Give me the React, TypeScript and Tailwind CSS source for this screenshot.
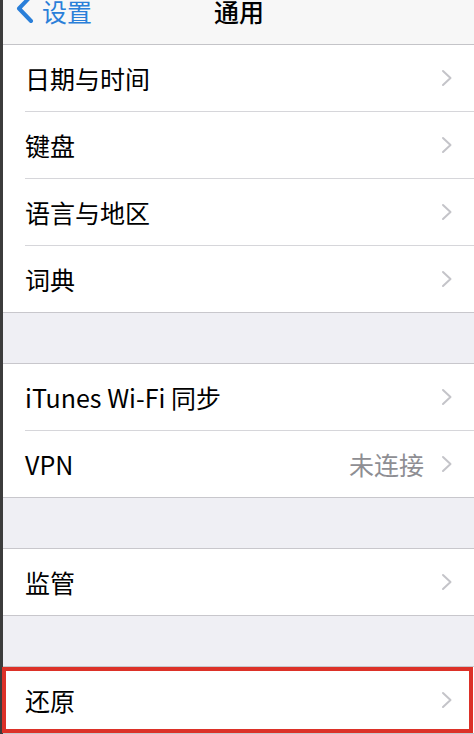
import React from "react";

const font = { fontFamily: '"Noto Sans CJK SC", "Noto Sans", sans-serif' };

function Chevron() {
  return (
    <svg width="12" height="18" viewBox="0 0 12 18" className="shrink-0">
      <path d="M2 2 L9.5 9 L2 16" fill="none" stroke="#c4c4c9" strokeWidth="2" strokeLinecap="round" strokeLinejoin="round" />
    </svg>
  );
}

function Row({ label, detail, last }: { label: string; detail?: string; last?: boolean }) {
  return (
    <div className={`flex h-[67px] pl-[22px] bg-white ${last ? "border-b border-[#c8c7cc]" : ""}`}>
      <div className={`flex flex-1 items-center pr-[21px] ${last ? "" : "border-b border-[#d6d6da]"}`}>
        <span className="flex-1 text-[25px] text-black leading-none">{label}</span>
        {detail && <span className="text-[25px] text-[#8e8e93] leading-none mr-[17px]">{detail}</span>}
        <Chevron />
      </div>
    </div>
  );
}

function Gap() {
  return <div className="h-[51px] bg-[#efeff4] border-b border-[#c8c7cc]" />;
}

export default function App() {
  return (
    <div className="w-[474px] h-[734px] overflow-hidden bg-[#efeff4] flex" style={font}>
      <div className="w-[3px] bg-[#3c3c3c] shrink-0" />
      <div className="flex-1 flex flex-col">
        <div className="h-[45px] bg-[#f7f7f7] border-b border-[#c4c4c8] relative">
          <div className="flex items-center h-[22px] pl-[11px]">
            <svg width="22" height="30" viewBox="0 0 22 30" className="-mt-[2px]">
              <path d="M17 1 L5 13.5 L17 26" fill="none" stroke="#2a7fd9" strokeWidth="4" strokeLinecap="round" strokeLinejoin="round" />
            </svg>
            <span className="ml-[6px] text-[25px] text-[#2a7fd9] leading-none">设置</span>
          </div>
          <div className="absolute left-0 right-0 top-0 h-[22px] flex items-center justify-center pl-[1px]">
            <span className="text-[25px] text-black font-medium leading-none">通用</span>
          </div>
        </div>
        <Row label="日期与时间" />
        <Row label="键盘" />
        <Row label="语言与地区" />
        <Row label="词典" last />
        <Gap />
        <Row label="iTunes Wi-Fi 同步" />
        <Row label="VPN" detail="未连接" last />
        <Gap />
        <Row label="监管" last />
        <Gap />
        <div className="relative">
          <Row label="还原" last />
          <div className="absolute -left-[1px] top-0 w-[471px] h-[66px] border-[4px] border-[#dc3128] pointer-events-none" />
        </div>
      </div>
    </div>
  );
}
